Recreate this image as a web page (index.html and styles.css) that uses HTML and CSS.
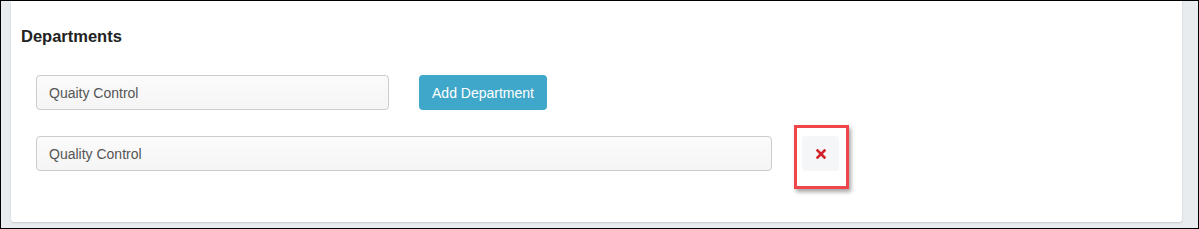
FILE: index.html
```html
<!DOCTYPE html>
<html>
<head>
    <link rel="stylesheet" href="styles.css">
</head>
<body>
    <div class="screen">
        <div class="panel">
            <h3 class="panel-title">Departments</h3>

            <!-- New department -->
            <div class="dept-row">
                <input class="dept-input dept-input-short" type="text" value="Quaity Control">
                <button class="btn-add">Add Department</button>
            </div>

            <!-- Existing departments -->
            <div class="dept-row">
                <input class="dept-input dept-input-long" type="text" value="Quality Control">
                <div class="remove-wrap">
                    <button class="btn-remove" title="Remove">
                        <svg width="10" height="10" viewBox="0 0 10 10">
                            <path d="M1.5 1.5 L8.5 8.5 M8.5 1.5 L1.5 8.5" stroke="#d2232a" stroke-width="2.6" stroke-linecap="square"/>
                        </svg>
                    </button>
                    <span class="highlight"></span>
                </div>
            </div>
        </div>
    </div>
</body>
</html>
```

FILE: styles.css
```css
html, body {
    margin: 0;
    padding: 0;
}

.screen {
    box-sizing: border-box;
    width: 1199px;
    height: 229px;
    border: 1px solid #000;
    background: #e8ecef;
    padding: 0 16px 0 10px;
    font-family: "Liberation Sans", Arial, sans-serif;
    overflow: hidden;
}

.panel {
    background: #fff;
    height: 221px;
    box-sizing: border-box;
    padding: 25px 10px 0 10px;
    border-radius: 0 0 3px 3px;
    box-shadow: 0 1px 2px rgba(0, 0, 0, 0.15);
}

.panel-title {
    margin: 0 0 29px 0;
    font-size: 16.5px;
    line-height: 20px;
    font-weight: bold;
    color: #222;
}

.dept-row {
    display: flex;
    align-items: center;
    gap: 30px;
    padding-left: 15px;
    margin-bottom: 26px;
}

.dept-input {
    box-sizing: border-box;
    height: 35px;
    padding: 0 12px;
    border: 1px solid #ccc;
    border-radius: 4px;
    background: linear-gradient(#fbfbfb, #f5f5f5);
    font-family: "Liberation Sans", Arial, sans-serif;
    font-size: 14px;
    color: #555;
    outline: none;
}

.dept-input-short {
    width: 353px;
}

.dept-input-long {
    width: 736px;
}

.btn-add {
    height: 35px;
    width: 128px;
    border: none;
    border-radius: 4px;
    background: #3fa7c9;
    color: #fff;
    font-family: "Liberation Sans", Arial, sans-serif;
    font-size: 14px;
    cursor: pointer;
}

.remove-wrap {
    position: relative;
}

.btn-remove {
    display: flex;
    align-items: center;
    justify-content: center;
    width: 37px;
    height: 35px;
    border: none;
    border-radius: 4px;
    background: #f5f6f8;
    padding: 0;
    cursor: pointer;
}

.highlight {
    position: absolute;
    left: -8px;
    top: -11px;
    width: 55px;
    height: 64px;
    box-sizing: border-box;
    border: 3px solid #f0454a;
    box-shadow: 2px 3px 4px rgba(0, 0, 0, 0.35);
    pointer-events: none;
}
```
